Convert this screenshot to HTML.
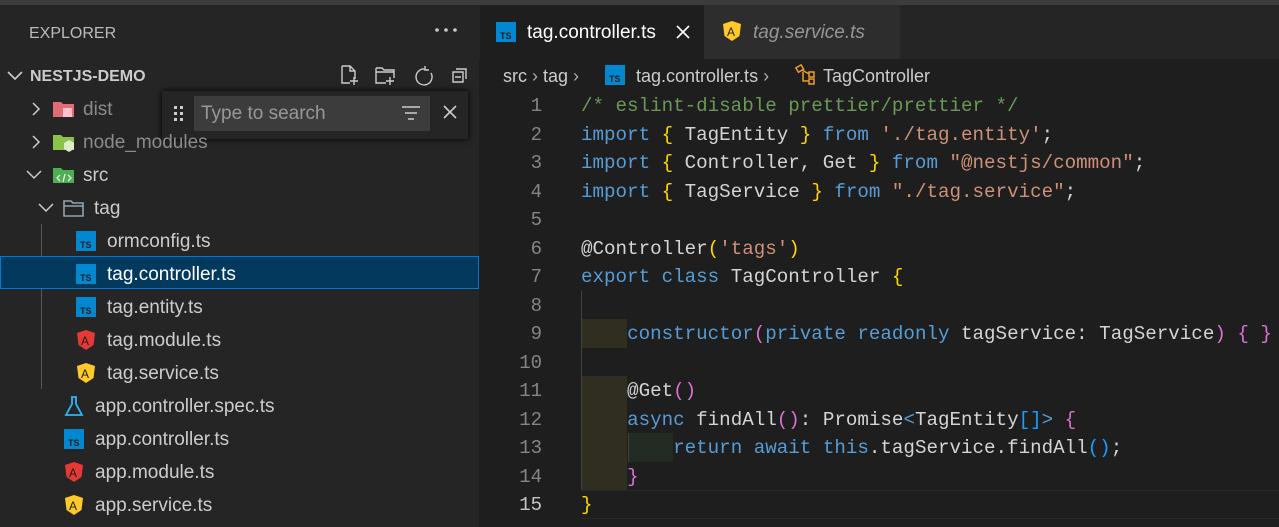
<!DOCTYPE html>
<html><head><meta charset="utf-8"><style>
*{margin:0;padding:0;box-sizing:border-box}
body{width:1279px;height:527px;overflow:hidden;background:#1e1e1e;font-family:"Segoe UI","Liberation Sans",sans-serif;position:relative}
.top{position:absolute;left:0;top:0;width:1279px;height:5px;background:#3c3c3c}
.side{position:absolute;left:0;top:5px;width:479px;height:522px;background:#252526}
.t{position:absolute;white-space:nowrap}
.row{position:absolute;left:0;width:479px;height:33px;line-height:35px;font-size:19px;color:#cccccc}
.row span.n{position:absolute;top:0}
.ico{position:absolute;top:7px}
.sel{background:#04395e;border:1px solid #0078d4}
.tabs{position:absolute;left:479px;top:5px;width:800px;height:54px;background:#252526}
.ln{position:absolute;left:480px;width:62px;text-align:right;color:#858585;font-family:"Liberation Mono",monospace;font-size:19px;height:28.5px;line-height:30px}
.cl{position:absolute;left:581px;white-space:pre;color:#d4d4d4;font-family:"Liberation Mono",monospace;font-size:19.2px;height:28.5px;line-height:30px}
.k{color:#569cd6}.s{color:#ce9178}.c{color:#6a9955}.y{color:#ffd700}.p{color:#da70d6}.b{color:#179fff}
</style></head><body>
<div class="top"></div>
<div class="side">
<div class="t" style="left:29px;top:20px;font-size:16px;color:#bbbbbb">EXPLORER</div>
<svg class="t" style="left:434px;top:22px" width="24" height="6" fill="#ccc"><circle cx="3" cy="3" r="1.8"/><circle cx="12" cy="3" r="1.8"/><circle cx="21" cy="3" r="1.8"/></svg>
<svg class="t" style="left:6px;top:64px" width="18" height="14"><path d="M2 3l7 7 7-7" stroke="#ccc" stroke-width="1.6" fill="none"/></svg>
<div class="t" style="left:30px;top:63px;font-size:16px;font-weight:bold;color:#cccccc">NESTJS-DEMO</div>
<svg class="t" style="left:338px;top:58px" width="135" height="24" fill="none" stroke="#ccc" stroke-width="1.4">
<path d="M4 3h8l5 5v8M4 3v17h8M12 3v5h5M16 14v8M12 18h8"/>
<path d="M38 5h6l2 2h10v8M38 5v15h10M38 9h18M52 14v8M48 18h8"/>
<path d="M87 6a8 8 0 1 0 6 4M87 3v4h4"/>
<path d="M115 9h10v10h-10zM118 6h10v10M117 14h6"/>
</svg>
<div class="t" style="left:162px;top:86px;width:306px;height:48px;background:#252526;box-shadow:0 0 6px #000"></div>
<svg class="t" style="left:173px;top:100px" width="12" height="18" fill="#ccc"><rect x="1" y="1" width="3" height="3"/><rect x="7" y="1" width="3" height="3"/><rect x="1" y="7" width="3" height="3"/><rect x="7" y="7" width="3" height="3"/><rect x="1" y="13" width="3" height="3"/><rect x="7" y="13" width="3" height="3"/></svg>
<div class="t" style="left:194px;top:91px;width:236px;height:35px;background:#3c3c3c"></div>
<div class="t" style="left:201px;top:98px;font-size:19px;color:#989898">Type to search</div>
<svg class="t" style="left:401px;top:100px" width="20" height="16" stroke="#ccc" stroke-width="1.5"><path d="M1 2h18M4 8h12M7 14h6"/></svg>
<svg class="t" style="left:442px;top:99px" width="16" height="16" stroke="#ccc" stroke-width="1.6"><path d="M2 2l12 12M14 2L2 14"/></svg>
</div>
<div class="row" style="top:92px"><svg class="ico" style="left:30px;top:9px" width="12" height="16"><path d="M3 2l6 6-6 6" stroke="#ccc" stroke-width="1.5" fill="none"/></svg><svg class="ico" style="left:52px" width="24" height="20"><path d="M1 3h8l2 2h11v13H1z" fill="#e06c75"/><rect x="11" y="9" width="9" height="9" fill="#ffc0cb"/></svg><span class="n" style="left:83px;color:#8b8b8b">dist</span></div>
<div class="row" style="top:125px"><svg class="ico" style="left:30px;top:9px" width="12" height="16"><path d="M3 2l6 6-6 6" stroke="#ccc" stroke-width="1.5" fill="none"/></svg><svg class="ico" style="left:52px" width="24" height="20"><path d="M1 3h8l2 2h11v13H1z" fill="#8bc34a"/><path d="M17 8l5 3v6l-5 3-5-3v-6z" fill="#dcedc8"/></svg><span class="n" style="left:83px;color:#8b8b8b">node_modules</span></div>
<div class="row" style="top:158px"><svg class="ico" style="left:25px;top:11px" width="18" height="12"><path d="M2 2l7 7 7-7" stroke="#ccc" stroke-width="1.5" fill="none"/></svg><svg class="ico" style="left:52px" width="24" height="20"><path d="M1 3h8l2 2h11v13H1z" fill="#4caf50"/><path d="M8 10l-3 3 3 3M16 10l3 3-3 3M13 9l-2 8" stroke="#e8f5e9" stroke-width="1.3" fill="none"/></svg><span class="n" style="left:83px">src</span></div>
<div class="row" style="top:191px"><svg class="ico" style="left:37px;top:11px" width="18" height="12"><path d="M2 2l7 7 7-7" stroke="#ccc" stroke-width="1.5" fill="none"/></svg><svg class="ico" style="left:63px" width="24" height="20"><path d="M1 3h7l2 2h10v13H1z" fill="none" stroke="#90a4ae" stroke-width="1.6"/><path d="M1 8h19" stroke="#90a4ae" stroke-width="1.6"/></svg><span class="n" style="left:94px">tag</span></div>
<div class="t" style="left:41px;top:224px;width:1px;height:165px;background:#585858"></div>
<div class="row sel" style="top:256px;height:33px"></div>
<div class="row" style="top:224px"><svg class="ico" style="left:76px" width="20" height="20"><rect width="20" height="20" fill="#0288d1"/><text x="4" y="17" font-size="9" font-weight="bold" fill="#1e1e1e" font-family="Liberation Sans">TS</text></svg><span class="n" style="left:107px">ormconfig.ts</span></div>
<div class="row" style="top:257px;color:#fff"><svg class="ico" style="left:76px" width="20" height="20"><rect width="20" height="20" fill="#0288d1"/><text x="4" y="17" font-size="9" font-weight="bold" fill="#1e1e1e" font-family="Liberation Sans">TS</text></svg><span class="n" style="left:107px">tag.controller.ts</span></div>
<div class="row" style="top:290px"><svg class="ico" style="left:76px" width="20" height="20"><rect width="20" height="20" fill="#0288d1"/><text x="4" y="17" font-size="9" font-weight="bold" fill="#1e1e1e" font-family="Liberation Sans">TS</text></svg><span class="n" style="left:107px">tag.entity.ts</span></div>
<div class="row" style="top:323px"><svg class="ico" style="left:76px" width="20" height="20"><path d="M10 0l9 3-1.5 12L10 20 2.5 15 1 3z" fill="#e53935"/><text x="5" y="15" font-size="12" fill="#1e1e1e" font-family="Liberation Sans">A</text></svg><span class="n" style="left:107px">tag.module.ts</span></div>
<div class="row" style="top:356px"><svg class="ico" style="left:76px" width="20" height="20"><path d="M10 0l9 3-1.5 12L10 20 2.5 15 1 3z" fill="#ffca28"/><text x="5" y="15" font-size="12" fill="#1e1e1e" font-family="Liberation Sans">A</text></svg><span class="n" style="left:107px">tag.service.ts</span></div>
<div class="row" style="top:389px"><svg class="ico" style="left:64px" width="20" height="22"><path d="M7 1h6M8 1v7L2 19h16L12 8V1" fill="none" stroke="#29b6f6" stroke-width="1.8"/></svg><span class="n" style="left:95px">app.controller.spec.ts</span></div>
<div class="row" style="top:422px"><svg class="ico" style="left:64px" width="20" height="20"><rect width="20" height="20" fill="#0288d1"/><text x="4" y="17" font-size="9" font-weight="bold" fill="#1e1e1e" font-family="Liberation Sans">TS</text></svg><span class="n" style="left:95px">app.controller.ts</span></div>
<div class="row" style="top:455px"><svg class="ico" style="left:64px" width="20" height="20"><path d="M10 0l9 3-1.5 12L10 20 2.5 15 1 3z" fill="#e53935"/><text x="5" y="15" font-size="12" fill="#1e1e1e" font-family="Liberation Sans">A</text></svg><span class="n" style="left:95px">app.module.ts</span></div>
<div class="row" style="top:488px"><svg class="ico" style="left:64px" width="20" height="20"><path d="M10 0l9 3-1.5 12L10 20 2.5 15 1 3z" fill="#ffca28"/><text x="5" y="15" font-size="12" fill="#1e1e1e" font-family="Liberation Sans">A</text></svg><span class="n" style="left:95px">app.service.ts</span></div>

<div class="tabs">
<div class="t" style="left:1px;top:0;width:224px;height:54px;background:#1e1e1e"></div>
<div class="t" style="left:225px;top:0;width:196px;height:54px;background:#2d2d2d"></div>
</div>
<svg class="t" style="left:496px;top:22px" width="20" height="20"><rect width="20" height="20" fill="#0288d1"/><text x="4" y="17" font-size="9" font-weight="bold" fill="#1e1e1e" font-family="Liberation Sans">TS</text></svg>
<div class="t" style="left:527px;top:22px;font-size:19px;color:#ffffff">tag.controller.ts</div>
<svg class="t" style="left:675px;top:24px" width="16" height="16" stroke="#fff" stroke-width="1.6"><path d="M2 2l12 12M14 2L2 14"/></svg>
<svg class="t" style="left:722px;top:21px" width="20" height="22"><path d="M10 0l9 3-1.5 12L10 20 2.5 15 1 3z" fill="#ffca28"/><text x="5" y="15" font-size="12" fill="#1e1e1e" font-family="Liberation Sans">A</text></svg>
<div class="t" style="left:753px;top:22px;font-size:19px;color:#969696;font-style:italic">tag.service.ts</div>
<div class="t" style="left:503px;top:66px;font-size:18px;color:#cccccc">src <span style="color:#aaa">&#x203A;</span> tag <span style="color:#aaa">&#x203A;</span></div>
<svg class="t" style="left:605px;top:65px" width="20" height="20"><rect width="20" height="20" fill="#0288d1"/><text x="4" y="17" font-size="9" font-weight="bold" fill="#1e1e1e" font-family="Liberation Sans">TS</text></svg>
<div class="t" style="left:636px;top:66px;font-size:18px;color:#cccccc">tag.controller.ts <span style="color:#aaa">&#x203A;</span></div>
<svg class="t" style="left:795px;top:64px" width="24" height="22" fill="none" stroke="#ee9d28" stroke-width="1.5"><rect x="2" y="2" width="6" height="5" transform="rotate(-30 5 5)"/><rect x="14" y="8" width="5" height="5"/><rect x="14" y="15" width="5" height="5"/><path d="M7 6l7 4M8 8v9h6"/></svg>
<div class="t" style="left:823px;top:66px;font-size:18px;color:#cccccc">TagController</div>
<div class="t" style="left:581px;top:291px;width:1px;height:200px;background:#404040"></div>
<div class="t" style="left:582px;top:319px;width:45px;height:29px;background:#2f2e20"></div>
<div class="t" style="left:582px;top:376px;width:45px;height:114px;background:#2f2e20"></div>
<div class="t" style="left:628px;top:433px;width:45px;height:29px;background:#222c22;border-left:1px solid #404040"></div>
<div class="t" style="left:581px;top:490px;width:698px;height:1px;background:#282828"></div>
<div class="t" style="left:581px;top:518px;width:698px;height:1px;background:#282828"></div>
<div class="ln" style="top:91px">1</div><div class="ln" style="top:119.5px">2</div><div class="ln" style="top:148px">3</div><div class="ln" style="top:176.5px">4</div><div class="ln" style="top:205px">5</div><div class="ln" style="top:233.5px">6</div><div class="ln" style="top:262px">7</div><div class="ln" style="top:290.5px">8</div><div class="ln" style="top:319px">9</div><div class="ln" style="top:347.5px">10</div><div class="ln" style="top:376px">11</div><div class="ln" style="top:404.5px">12</div><div class="ln" style="top:433px">13</div><div class="ln" style="top:461.5px">14</div><div class="ln" style="top:490px;color:#c6c6c6">15</div>
<div class="cl" style="top:91px"><span class="c">/* eslint-disable prettier/prettier */</span></div>
<div class="cl" style="top:119.5px"><span class="k">import</span> <span class="y">{</span> TagEntity <span class="y">}</span> <span class="k">from</span> <span class="s">'./tag.entity'</span>;</div>
<div class="cl" style="top:148px"><span class="k">import</span> <span class="y">{</span> Controller, Get <span class="y">}</span> <span class="k">from</span> <span class="s">"@nestjs/common"</span>;</div>
<div class="cl" style="top:176.5px"><span class="k">import</span> <span class="y">{</span> TagService <span class="y">}</span> <span class="k">from</span> <span class="s">"./tag.service"</span>;</div>
<div class="cl" style="top:233.5px">@Controller<span class="y">(</span><span class="s">'tags'</span><span class="y">)</span></div>
<div class="cl" style="top:262px"><span class="k">export</span> <span class="k">class</span> TagController <span class="y">{</span></div>
<div class="cl" style="top:319px">    <span class="k">constructor</span><span class="p">(</span><span class="k">private</span> <span class="k">readonly</span> tagService: TagService<span class="p">)</span> <span class="p">{</span> <span class="p">}</span></div>
<div class="cl" style="top:376px">    @Get<span class="p">()</span></div>
<div class="cl" style="top:404.5px">    <span class="k">async</span> findAll<span class="p">()</span>: Promise<span class="k">&lt;</span>TagEntity<span class="b">[]</span><span class="k">&gt;</span> <span class="p">{</span></div>
<div class="cl" style="top:433px">        <span class="k">return</span> <span class="k">await</span> <span class="k">this</span>.tagService.findAll<span class="b">()</span>;</div>
<div class="cl" style="top:461.5px">    <span class="p">}</span></div>
<div class="cl" style="top:490px"><span class="y">}</span></div>
</body></html>
